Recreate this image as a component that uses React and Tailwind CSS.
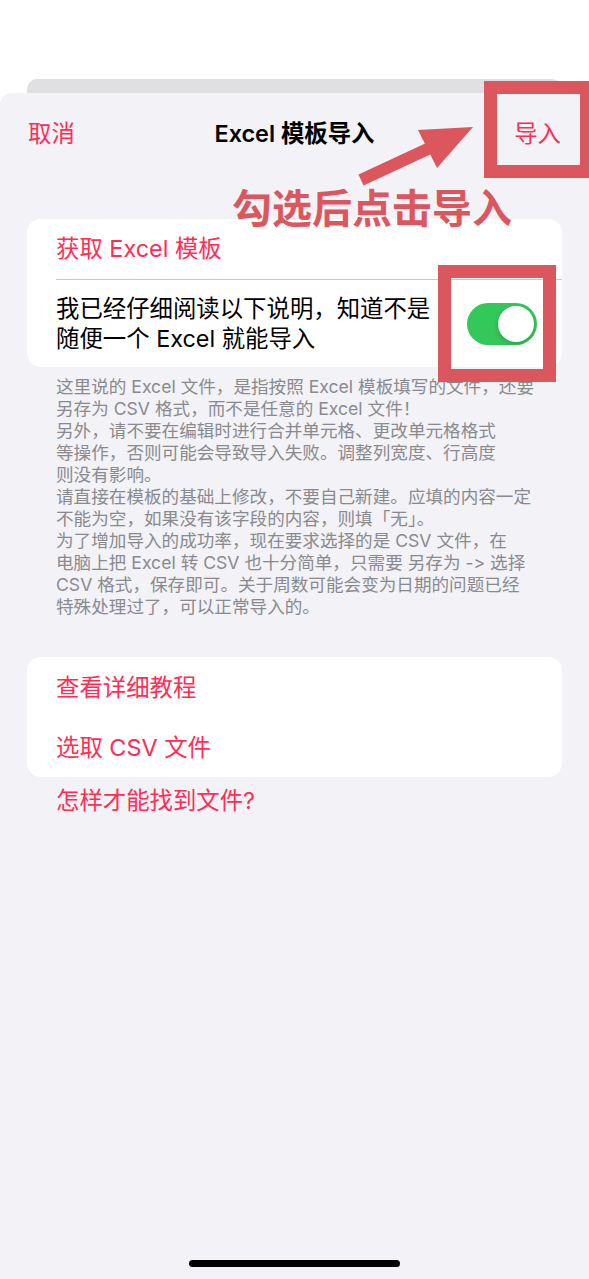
const font = { fontFamily: '"Inter", "Noto Sans CJK SC", sans-serif' };

const footerLines = [
    '这里说的 Excel 文件，是指按照 Excel 模板填写的文件，还要',
    '另存为 CSV 格式，而不是任意的 Excel 文件！',
    '另外，请不要在编辑时进行合并单元格、更改单元格格式',
    '等操作，否则可能会导致导入失败。调整列宽度、行高度',
    '则没有影响。',
    '请直接在模板的基础上修改，不要自己新建。应填的内容一定',
    '不能为空，如果没有该字段的内容，则填「无」。',
    '为了增加导入的成功率，现在要求选择的是 CSV 文件，在',
    '电脑上把 Excel 转 CSV 也十分简单，只需要 另存为 -> 选择',
    'CSV 格式，保存即可。关于周数可能会变为日期的问题已经',
    '特殊处理过了，可以正常导入的。',
];

const Toggle = () => (
    <div className="w-[70px] h-[42px] rounded-full bg-[#34c759] flex items-center justify-end px-[3px]">
        <div className="w-[36px] h-[36px] rounded-full bg-white shadow-[0_2px_5px_rgba(0,0,0,0.2)]" />
    </div>
);

export default function App() {
    return (
        <div className="relative w-[589px] h-[1279px] overflow-hidden bg-white flex flex-col [font-variant-ligatures:none]" style={font}>
            <div className="h-[79px] shrink-0" />
            {/* карточка позади */}
            <div className="mx-[27px] h-[14px] shrink-0 rounded-t-[10px] bg-[#e0e0e2]" />

            <div className="flex-1 flex flex-col bg-[#f2f2f7] rounded-t-[12px]">
                {/* навигация */}
                <div className="h-[82px] px-[28px] flex items-center justify-between text-[23.4px]">
                    <span className="text-[#ff2d55]">取消</span>
                    <span className="font-semibold text-black">Excel 模板导入</span>
                    <span className="text-[#ff2d55]">导入</span>
                </div>

                <div className="mt-[44px] mx-[27px] bg-white rounded-[14px] text-[23.4px]">
                    <div className="h-[60px] pl-[29px] flex items-center text-[#ff2d55]">获取 Excel 模板</div>
                    <div className="ml-[29px] h-px bg-[#c8c8cc]" />
                    <div className="h-[87px] pl-[29px] pr-[25px] flex items-center justify-between">
                        <div className="leading-[30px] text-black">
                            我已经仔细阅读以下说明，知道不是
                            <br />
                            随便一个 Excel 就能导入
                        </div>
                        <Toggle />
                    </div>
                </div>

                <div className="mt-[9px] pl-[56px] text-[17.6px] leading-[22px] text-[#8a8a8e] whitespace-nowrap">
                    {footerLines.map((l, i) => (
                        <div key={i}>{l}</div>
                    ))}
                </div>

                <div className="mt-[39px] mx-[27px] bg-white rounded-[14px] text-[23.4px] text-[#ff2d55]">
                    <div className="h-[61px] pl-[29px] flex items-center">查看详细教程</div>
                    <div className="h-[59px] pl-[29px] flex items-center">选取 CSV 文件</div>
                </div>

                <div className="mt-[9px] pl-[56px] text-[23.4px] leading-[30px] text-[#ff2d55]">怎样才能找到文件?</div>

                <div className="mt-auto pb-[12px] flex justify-center">
                    <div className="w-[211px] h-[7px] rounded-full bg-black" />
                </div>
            </div>

            {/* пометки поверх скриншота */}
            <div className="absolute left-[484px] top-[81px] w-[109px] h-[97px] border-[13px] border-[#db575d]" />
            <div className="absolute left-[438px] top-[265px] w-[118px] h-[117px] border-[13px] border-[#db575d]" />
            <div
                className="absolute left-[232px] top-[186px] text-[40px] leading-[40px] font-bold text-[#db575d] whitespace-nowrap"
                style={{ fontFamily: '"Noto Sans CJK SC", sans-serif' }}
            >
                勾选后点击导入
            </div>
            <svg className="absolute left-[340px] top-[110px]" width="150" height="90" viewBox="340 110 150 90">
                <line x1="361" y1="180" x2="432" y2="147" stroke="#db575d" strokeWidth="12" />
                <polygon points="473,127 418,130 437,168" fill="#db575d" />
            </svg>
        </div>
    );
}
